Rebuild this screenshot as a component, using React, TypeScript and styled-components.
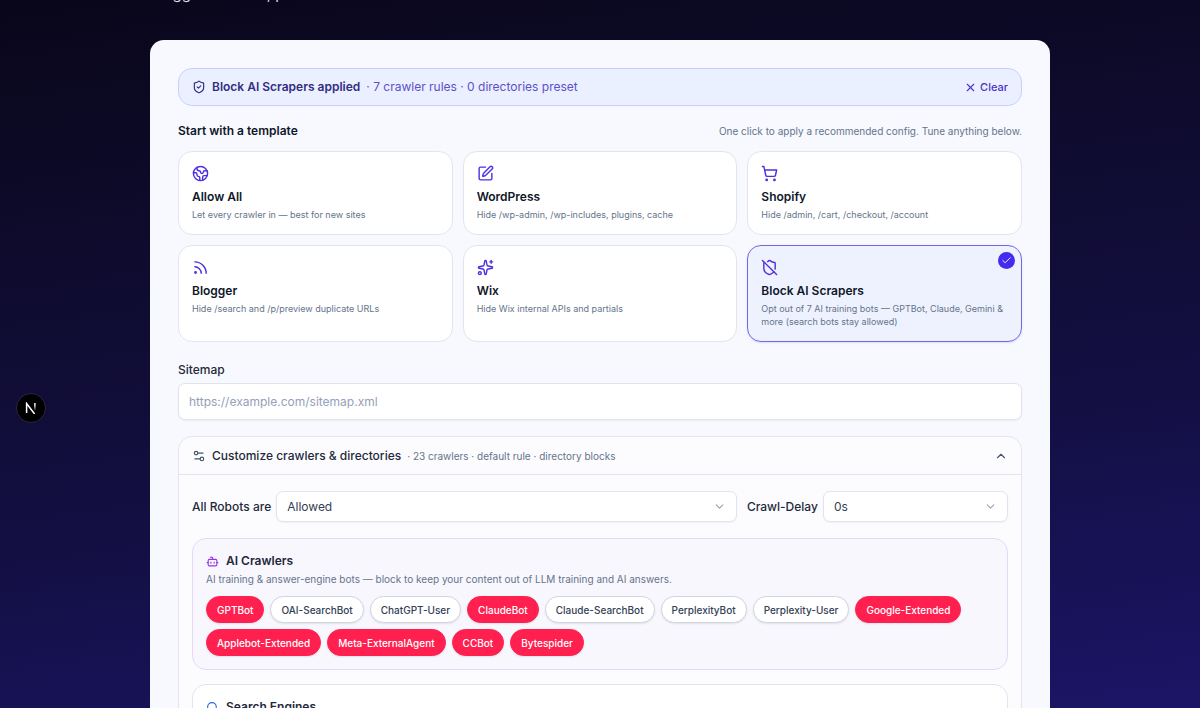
import React, { useState } from 'react';
import styled, { createGlobalStyle, css } from 'styled-components';
import {
  Bot, Check, ChevronDown, ChevronUp, Earth, Rss, Search, Settings2,
  ShieldCheck, ShieldOff, ShoppingCart, Sparkles, SquarePen, X,
} from 'lucide-react';
import type { LucideIcon } from 'lucide-react';

const GlobalStyle = createGlobalStyle`
  *, *::before, *::after { box-sizing: border-box; }
  html { background: #0a0a1a; }
  body {
    margin: 0;
    font-family: Inter, "Liberation Sans", sans-serif;
    font-size: 12px;
    line-height: 18px;
    color: #0f172a;
  }
  h1, h2, h3, p { margin: 0; }
  button, input, select { font: inherit; color: inherit; }
  svg { display: block; flex: none; }
`;

const Page = styled.div`
  height: 100vh;
  overflow: hidden;
  background: linear-gradient(172deg, #09061a 0%, #0d0a28 22%, #130f42 62%, #1b1566 100%);
`;

const Main = styled.main`
  max-width: 900px;
  margin: 0 auto;
`;

const Intro = styled.p`
  height: 40px;
  display: flex;
  align-items: flex-start;
  color: #dcdcea;
  font-size: 15px;
  line-height: 28px;

  span { margin-top: -20px; }
`;

const Panel = styled.div`
  padding: 28px;
  min-height: 100vh;
  border-radius: 14px 14px 0 0;
  background: #f8f9fe;
`;

const Banner = styled.div`
  display: flex;
  align-items: center;
  gap: 6px;
  height: 38px;
  padding: 0 13px;
  border: 1px solid #c9cffa;
  border-radius: 14px;
  background: #eaf0ff;
  color: #312e81;
`;

const BannerTitle = styled.strong`
  font-weight: 600;
`;

const BannerNote = styled.span`
  color: #5f4fc8;
`;

const ClearButton = styled.button`
  display: flex;
  align-items: center;
  gap: 3px;
  margin-left: auto;
  padding: 0;
  border: 0;
  background: none;
  color: #4a32c8;
  font-size: 11px;
  font-weight: 500;
  cursor: pointer;
`;

const SectionHead = styled.div`
  display: flex;
  align-items: baseline;
  justify-content: space-between;
  margin: 16px 0 11px;
`;

const SectionTitle = styled.h2`
  font-size: 12px;
  font-weight: 600;
`;

const Hint = styled.p`
  color: #64748b;
  font-size: 10px;
`;

const TemplateGrid = styled.div`
  display: grid;
  grid-template-columns: repeat(3, minmax(0, 1fr));
  gap: 10px;
`;

const TemplateCard = styled.button<{ $selected: boolean }>`
  position: relative;
  display: flex;
  flex-direction: column;
  align-items: flex-start;
  padding: 13px;
  border: 1px solid #e2e5ef;
  border-radius: 14px;
  background: #fff;
  text-align: left;
  cursor: pointer;

  > svg { color: #4f2fe0; }

  ${({ $selected }) => $selected && css`
    border-color: #7468e0;
    background: #eef2ff;
    box-shadow: 0 1px 2px rgba(79, 57, 246, 0.15);
  `}
`;

const TemplateName = styled.span`
  margin: 6px 0 2px;
  font-size: 12px;
  font-weight: 600;
`;

const TemplateText = styled.span`
  color: #64748b;
  font-size: 9px;
  line-height: 13px;
`;

const SelectedMark = styled.span`
  position: absolute;
  top: 6px;
  right: 6px;
  display: grid;
  place-items: center;
  width: 17px;
  height: 17px;
  border-radius: 50%;
  background: #432bf0;
  color: #fff;
`;

const Field = styled.div`
  display: flex;
  flex-direction: column;
  gap: 4px;
  margin: 19px 0 16px;
`;

const Label = styled.label`
  color: #1e293b;
  font-size: 12px;
  font-weight: 500;
  white-space: nowrap;
`;

const TextInput = styled.input`
  width: 100%;
  height: 37px;
  padding: 0 10px;
  border: 1px solid #e0e4ee;
  border-radius: 7px;
  background: #fff;
  box-shadow: 0 1px 2px rgba(15, 23, 42, 0.05);

  &::placeholder { color: #94a0b8; opacity: 1; }
`;

const Customize = styled.section`
  border: 1px solid #e2e5ef;
  border-radius: 14px;
  background: #fcfcff;
`;

const CustomizeToggle = styled.button`
  display: flex;
  align-items: center;
  gap: 6px;
  width: 100%;
  height: 38px;
  padding: 0 13px;
  border: 0;
  border-bottom: 1px solid #e2e5ef;
  background: none;
  color: #475569;
  cursor: pointer;

  > svg:last-child { margin-left: auto; }
`;

const CustomizeTitle = styled.span`
  color: #1e293b;
  font-weight: 500;
`;

const CustomizeNote = styled.span`
  color: #64748b;
  font-size: 10px;
`;

const CustomizeBody = styled.div`
  display: flex;
  flex-direction: column;
  gap: 14px;
  padding: 16px 13px;
`;

const RuleRow = styled.div`
  display: flex;
  align-items: center;
  gap: 10px;
  margin-bottom: 2px;
`;

const RuleField = styled.div<{ $wide?: boolean }>`
  display: flex;
  align-items: center;
  gap: 5px;
  flex: ${({ $wide }) => ($wide ? '1' : '0 0 32%')};
`;

const SelectWrap = styled.div`
  position: relative;
  flex: 1;
  color: #94a3b8;

  svg {
    position: absolute;
    top: 9px;
    right: 11px;
    pointer-events: none;
  }
`;

const Select = styled.select`
  display: block;
  width: 100%;
  height: 31px;
  padding: 0 10px;
  border: 1px solid #e0e4ee;
  border-radius: 7px;
  appearance: none;
  background: #fff;
  box-shadow: 0 1px 2px rgba(15, 23, 42, 0.05);
  color: #334155;
  font-size: 12px;
`;

const Group = styled.section<{ $tinted?: boolean }>`
  padding: 13px;
  border: 1px solid ${({ $tinted }) => ($tinted ? '#e6d8fb' : '#e2e5ef')};
  border-radius: 14px;
  background: ${({ $tinted }) => ($tinted ? '#f9f7fe' : '#fff')};
`;

const GroupTitle = styled.h3<{ $color: string }>`
  display: flex;
  align-items: center;
  gap: 7px;
  font-size: 12px;
  font-weight: 600;
  color: #1e293b;

  svg { color: ${({ $color }) => $color}; }
`;

const Chips = styled.div`
  display: flex;
  flex-wrap: wrap;
  gap: 6px;
  margin-top: 8px;
`;

const Chip = styled.button<{ $blocked: boolean }>`
  height: 27px;
  padding: 0 10px;
  border: 1px solid ${({ $blocked }) => ($blocked ? '#ff2050' : '#d0d5e0')};
  border-radius: 14px;
  background: ${({ $blocked }) => ($blocked ? '#ff2050' : '#fff')};
  box-shadow: 0 1px 2px rgba(15, 23, 42, 0.1);
  color: ${({ $blocked }) => ($blocked ? '#fff' : '#334155')};
  font-size: 10px;
  font-weight: 500;
  cursor: pointer;
`;

const DevBadge = styled.button`
  position: fixed;
  left: 16px;
  top: 393px;
  display: grid;
  place-items: center;
  width: 30px;
  height: 30px;
  padding: 0;
  border: 1px solid #29263c;
  border-radius: 50%;
  background: #000;
`;

type Template = { name: string; text: string; icon: LucideIcon };

const templates: Template[] = [
  { name: 'Allow All', text: 'Let every crawler in — best for new sites', icon: Earth },
  { name: 'WordPress', text: 'Hide /wp-admin, /wp-includes, plugins, cache', icon: SquarePen },
  { name: 'Shopify', text: 'Hide /admin, /cart, /checkout, /account', icon: ShoppingCart },
  { name: 'Blogger', text: 'Hide /search and /p/preview duplicate URLs', icon: Rss },
  { name: 'Wix', text: 'Hide Wix internal APIs and partials', icon: Sparkles },
  {
    name: 'Block AI Scrapers',
    text: 'Opt out of 7 AI training bots — GPTBot, Claude, Gemini & more (search bots stay allowed)',
    icon: ShieldOff,
  },
];

const aiCrawlers = [
  'GPTBot', 'OAI-SearchBot', 'ChatGPT-User', 'ClaudeBot', 'Claude-SearchBot', 'PerplexityBot',
  'Perplexity-User', 'Google-Extended', 'Applebot-Extended', 'Meta-ExternalAgent', 'CCBot', 'Bytespider',
];

const blockedByDefault = [
  'GPTBot', 'ClaudeBot', 'Google-Extended', 'Applebot-Extended', 'Meta-ExternalAgent', 'CCBot', 'Bytespider',
];

export default function App() {
  const [selected, setSelected] = useState('Block AI Scrapers');
  const [blocked, setBlocked] = useState<string[]>(blockedByDefault);

  const toggle = (name: string) =>
    setBlocked((list) => (list.includes(name) ? list.filter((n) => n !== name) : [...list, name]));

  return (
    <Page>
      <GlobalStyle />
      <Main>
        <Intro><span>Blogger and Wix, p</span></Intro>
        <Panel>
          <Banner>
            <ShieldCheck size={14} />
            <BannerTitle>Block AI Scrapers applied</BannerTitle>
            <BannerNote>· 7 crawler rules · 0 directories preset</BannerNote>
            <ClearButton type="button"><X size={13} />Clear</ClearButton>
          </Banner>

          <SectionHead>
            <SectionTitle>Start with a template</SectionTitle>
            <Hint>One click to apply a recommended config. Tune anything below.</Hint>
          </SectionHead>

          <TemplateGrid>
            {templates.map(({ name, text, icon: Icon }) => (
              <TemplateCard
                key={name}
                type="button"
                $selected={name === selected}
                aria-pressed={name === selected}
                onClick={() => setSelected(name)}
              >
                <Icon size={17} />
                <TemplateName>{name}</TemplateName>
                <TemplateText>{text}</TemplateText>
                {name === selected && <SelectedMark><Check size={11} /></SelectedMark>}
              </TemplateCard>
            ))}
          </TemplateGrid>

          <Field>
            <Label htmlFor="sitemap">Sitemap</Label>
            <TextInput id="sitemap" type="url" placeholder="https://example.com/sitemap.xml" />
          </Field>

          <Customize>
            <CustomizeToggle type="button" aria-expanded="true">
              <Settings2 size={14} />
              <CustomizeTitle>Customize crawlers &amp; directories</CustomizeTitle>
              <CustomizeNote>· 23 crawlers · default rule · directory blocks</CustomizeNote>
              <ChevronUp size={14} />
            </CustomizeToggle>
            <CustomizeBody>
              <RuleRow>
                <RuleField $wide>
                  <Label htmlFor="default-rule">All Robots are</Label>
                  <SelectWrap>
                    <Select id="default-rule"><option>Allowed</option><option>Refused</option></Select>
                    <ChevronDown size={13} />
                  </SelectWrap>
                </RuleField>
                <RuleField>
                  <Label htmlFor="crawl-delay">Crawl-Delay</Label>
                  <SelectWrap>
                    <Select id="crawl-delay"><option>0s</option><option>5s</option></Select>
                    <ChevronDown size={13} />
                  </SelectWrap>
                </RuleField>
              </RuleRow>

              <Group $tinted>
                <GroupTitle $color="#9333ea"><Bot size={13} />AI Crawlers</GroupTitle>
                <Hint>AI training &amp; answer-engine bots — block to keep your content out of LLM training and AI answers.</Hint>
                <Chips>
                  {aiCrawlers.map((name) => (
                    <Chip
                      key={name}
                      type="button"
                      $blocked={blocked.includes(name)}
                      aria-pressed={blocked.includes(name)}
                      onClick={() => toggle(name)}
                    >
                      {name}
                    </Chip>
                  ))}
                </Chips>
              </Group>

              <Group>
                <GroupTitle $color="#2563eb"><Search size={13} />Search Engines</GroupTitle>
              </Group>
            </CustomizeBody>
          </Customize>
        </Panel>
      </Main>
      <DevBadge type="button" aria-label="Open Next.js developer tools">
        <svg width="12" height="12" viewBox="0 0 12 12" fill="none">
          <defs>
            <linearGradient id="fade" x1="0" y1="0" x2="0" y2="1">
              <stop offset="0.3" stopColor="#fff" />
              <stop offset="1" stopColor="#fff" stopOpacity="0" />
            </linearGradient>
          </defs>
          <path d="M1.6 11V1.5L9.6 12" stroke="#fff" strokeWidth="1.5" />
          <path d="M9.2 1h1.4v8H9.2z" fill="url(#fade)" />
        </svg>
      </DevBadge>
    </Page>
  );
}
